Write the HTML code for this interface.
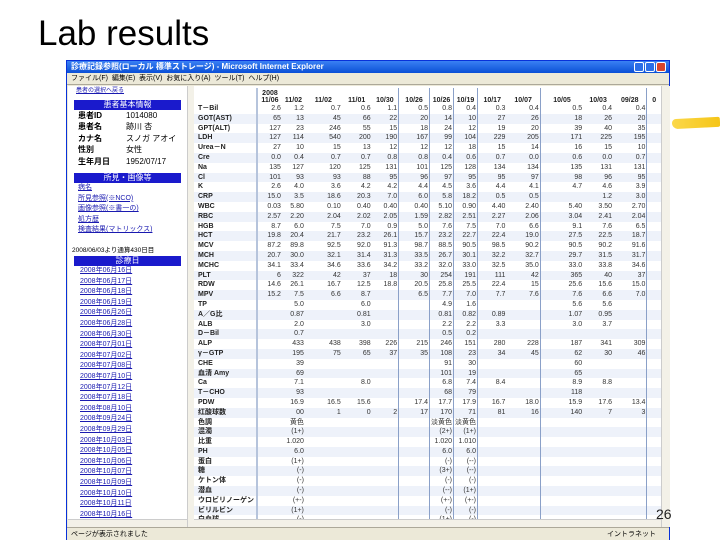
<!DOCTYPE html>
<html><head><meta charset="utf-8"><style>
*{margin:0;padding:0;box-sizing:border-box}
body{width:720px;height:540px;background:#fff;position:relative;overflow:hidden;font-family:"Liberation Sans","Noto Sans CJK JP",sans-serif}
.title{position:absolute;left:38px;top:14px;font-size:35px;color:#000}
.win{position:absolute;left:66px;top:60px;width:604px;height:480px;background:#ece9d8;border:1px solid #0831d9}
.tb{position:absolute;left:0;top:0;width:602px;height:12px;background:linear-gradient(#3a81f3,#0a4fd6);color:#fff;font-size:8px;line-height:12px;padding-left:4px;font-weight:bold}
.btn{position:absolute;top:1px;width:10px;height:10px;border:1px solid #fff;border-radius:2px;background:#2b6ee8}
.menu{position:absolute;left:0;top:12px;width:602px;height:12px;font-size:7px;line-height:12px;padding-left:4px;color:#000;border-bottom:1px solid #aca899}
.left{position:absolute;left:1px;top:25px;width:119px;height:433px;background:#fff;font-size:7px;overflow:hidden}
.lsb{position:absolute;left:120px;top:25px;width:7px;height:441px;background:#f3f1e8;border-left:1px solid #ccc}
.right{position:absolute;left:127px;top:25px;width:467px;height:433px;background:#fff;overflow:hidden}
.rsb{position:absolute;left:594px;top:25px;width:9px;height:441px;background:#f3f1e8;border-left:1px solid #ccc}
.hsb{position:absolute;top:458px;height:8px;background:#f3f1e8;border-top:1px solid #ccc}
.status{position:absolute;left:0;top:466px;width:602px;height:13px;background:#ece9d8;font-size:7px;line-height:13px;padding-left:4px;border-top:1px solid #aca899}
.hdr{background:#1a1acc;color:#fff;text-align:center;font-size:8px;height:10px;line-height:10px;margin:0 6px}
.lnk{color:#1a1ab0;text-decoration:underline;font-size:7px;height:10.6px;line-height:10.6px;padding-left:12px}
.kv{display:flex;font-size:8px;height:11.5px;line-height:11.5px;padding-left:10px}
.kv b{width:48px;color:#000}
table{border-collapse:collapse;font-size:7px;position:absolute;left:0;top:2px}
td{height:9.8px;line-height:9.8px;padding:0 1px;text-align:right;color:#333;white-space:nowrap;overflow:hidden}
td:first-child{text-align:left;font-weight:bold;color:#222;width:63px;border-right:2px solid #b6c4dc;padding-left:4px}
tr:nth-child(odd) td{background:#eef2fa}
tr.h td{background:#fff;height:16px;line-height:7px;vertical-align:bottom;text-align:center;font-weight:bold;color:#222}
.s{border-right:1px solid #8aa0c8}
</style></head><body>
<div class="title">Lab results</div>
<div style="position:absolute;left:672px;top:118px;width:48px;height:10px;background:linear-gradient(90deg,#fbd84a,#f5c518);border-radius:4px 2px 2px 6px;transform:rotate(-3deg)"></div>
<div class="win">
<div class="tb">診療記録参照(ローカル 標準ストレージ) - Microsoft Internet Explorer
<div class="btn" style="left:567px"></div><div class="btn" style="left:578px"></div><div class="btn" style="left:589px;background:#d9452c"></div></div>
<div class="menu">ファイル(F)&nbsp; 編集(E)&nbsp; 表示(V)&nbsp; お気に入り(A)&nbsp; ツール(T)&nbsp; ヘルプ(H)</div>
<div class="left">
<div class="lnk" style="padding-left:8px;font-size:6px">患者の選択へ戻る</div>
<div class="hdr" style="margin-top:3px">患者基本情報</div>
<div class="kv"><b>患者ID</b>1014080</div>
<div class="kv"><b>患者名</b>跡川 杏</div>
<div class="kv"><b>カナ名</b>スノガ アオイ</div>
<div class="kv"><b>性別</b>女性</div>
<div class="kv"><b>生年月日</b>1952/07/17</div>
<div class="hdr" style="margin-top:6px">所見・画像等</div>
<div class="lnk" style="padding-left:10px">病名</div>
<div class="lnk" style="padding-left:10px">所見参照(※NCO)</div>
<div class="lnk" style="padding-left:10px">画像参照(※書一の)</div>
<div class="lnk" style="padding-left:10px">処方歴</div>
<div class="lnk" style="padding-left:10px">検査結果(マトリックス)</div>
<div style="font-size:6.5px;margin-top:8px;padding-left:4px">2008/06/03より通算430日目</div>
<div class="hdr" style="margin-top:2px">診療日</div>
<div class="lnk">2008年06月16日</div><div class="lnk">2008年06月17日</div><div class="lnk">2008年06月18日</div><div class="lnk">2008年06月19日</div><div class="lnk">2008年06月26日</div><div class="lnk">2008年06月28日</div><div class="lnk">2008年06月30日</div><div class="lnk">2008年07月01日</div><div class="lnk">2008年07月02日</div><div class="lnk">2008年07月08日</div><div class="lnk">2008年07月10日</div><div class="lnk">2008年07月12日</div><div class="lnk">2008年07月18日</div><div class="lnk">2008年08月10日</div><div class="lnk">2008年09月24日</div><div class="lnk">2008年09月29日</div><div class="lnk">2008年10月03日</div><div class="lnk">2008年10月05日</div><div class="lnk">2008年10月06日</div><div class="lnk">2008年10月07日</div><div class="lnk">2008年10月09日</div><div class="lnk">2008年10月10日</div><div class="lnk">2008年10月11日</div><div class="lnk">2008年10月16日</div><div class="lnk">2008年10月17日</div>
</div>
<div class="lsb"></div>
<div class="right"><table>
<colgroup><col><col style="width:25px"><col style="width:23px"><col style="width:37px"><col style="width:30px"><col style="width:27px"><col style="width:31px"><col style="width:24px"><col style="width:24px"><col style="width:29px"><col style="width:34px"><col style="width:43px"><col style="width:30px"><col style="width:34px"><col style="width:14px"></colgroup>
<tr class="h"><td></td><td>2008<br>11/06</td><td>11/02</td><td>11/02</td><td>11/01</td><td class="s">10/30</td><td class="s">10/26</td><td class="s">10/26</td><td class="s">10/19</td><td>10/17</td><td class="s">10/07</td><td>10/05</td><td>10/03</td><td class="s">09/28</td><td>0</td></tr>
<tr><td>T－Bil</td><td>2.6</td><td>1.2</td><td>0.7</td><td>0.6</td><td class="s">1.1</td><td class="s">0.5</td><td class="s">0.8</td><td class="s">0.4</td><td>0.3</td><td class="s">0.4</td><td>0.5</td><td>0.4</td><td class="s">0.4</td><td></td></tr>
<tr><td>GOT(AST)</td><td>65</td><td>13</td><td>45</td><td>66</td><td class="s">22</td><td class="s">20</td><td class="s">14</td><td class="s">10</td><td>27</td><td class="s">26</td><td>18</td><td>26</td><td class="s">20</td><td></td></tr>
<tr><td>GPT(ALT)</td><td>127</td><td>23</td><td>246</td><td>55</td><td class="s">15</td><td class="s">18</td><td class="s">24</td><td class="s">12</td><td>19</td><td class="s">20</td><td>39</td><td>40</td><td class="s">35</td><td></td></tr>
<tr><td>LDH</td><td>127</td><td>114</td><td>540</td><td>200</td><td class="s">190</td><td class="s">167</td><td class="s">99</td><td class="s">104</td><td>229</td><td class="s">205</td><td>171</td><td>225</td><td class="s">195</td><td></td></tr>
<tr><td>Urea－N</td><td>27</td><td>10</td><td>15</td><td>13</td><td class="s">12</td><td class="s">12</td><td class="s">12</td><td class="s">18</td><td>15</td><td class="s">14</td><td>16</td><td>15</td><td class="s">10</td><td></td></tr>
<tr><td>Cre</td><td>0.0</td><td>0.4</td><td>0.7</td><td>0.7</td><td class="s">0.8</td><td class="s">0.8</td><td class="s">0.4</td><td class="s">0.6</td><td>0.7</td><td class="s">0.0</td><td>0.6</td><td>0.0</td><td class="s">0.7</td><td></td></tr>
<tr><td>Na</td><td>135</td><td>127</td><td>120</td><td>125</td><td class="s">131</td><td class="s">101</td><td class="s">125</td><td class="s">128</td><td>134</td><td class="s">134</td><td>135</td><td>131</td><td class="s">131</td><td></td></tr>
<tr><td>Cl</td><td>101</td><td>93</td><td>93</td><td>88</td><td class="s">95</td><td class="s">96</td><td class="s">97</td><td class="s">95</td><td>95</td><td class="s">97</td><td>98</td><td>96</td><td class="s">95</td><td></td></tr>
<tr><td>K</td><td>2.6</td><td>4.0</td><td>3.6</td><td>4.2</td><td class="s">4.2</td><td class="s">4.4</td><td class="s">4.5</td><td class="s">3.6</td><td>4.4</td><td class="s">4.1</td><td>4.7</td><td>4.6</td><td class="s">3.9</td><td></td></tr>
<tr><td>CRP</td><td>15.0</td><td>3.5</td><td>18.6</td><td>20.3</td><td class="s">7.0</td><td class="s">6.0</td><td class="s">5.8</td><td class="s">18.2</td><td>0.5</td><td class="s">0.5</td><td></td><td>1.2</td><td class="s">3.0</td><td></td></tr>
<tr><td>WBC</td><td>0.03</td><td>5.80</td><td>0.10</td><td>0.40</td><td class="s">0.40</td><td class="s">0.40</td><td class="s">5.10</td><td class="s">0.90</td><td>4.40</td><td class="s">2.40</td><td>5.40</td><td>3.50</td><td class="s">2.70</td><td></td></tr>
<tr><td>RBC</td><td>2.57</td><td>2.20</td><td>2.04</td><td>2.02</td><td class="s">2.05</td><td class="s">1.59</td><td class="s">2.82</td><td class="s">2.51</td><td>2.27</td><td class="s">2.06</td><td>3.04</td><td>2.41</td><td class="s">2.04</td><td></td></tr>
<tr><td>HGB</td><td>8.7</td><td>6.0</td><td>7.5</td><td>7.0</td><td class="s">0.9</td><td class="s">5.0</td><td class="s">7.6</td><td class="s">7.5</td><td>7.0</td><td class="s">6.6</td><td>9.1</td><td>7.6</td><td class="s">6.5</td><td></td></tr>
<tr><td>HCT</td><td>19.8</td><td>20.4</td><td>21.7</td><td>23.2</td><td class="s">26.1</td><td class="s">15.7</td><td class="s">23.2</td><td class="s">22.7</td><td>22.4</td><td class="s">19.0</td><td>27.5</td><td>22.5</td><td class="s">18.7</td><td></td></tr>
<tr><td>MCV</td><td>87.2</td><td>89.8</td><td>92.5</td><td>92.0</td><td class="s">91.3</td><td class="s">98.7</td><td class="s">88.5</td><td class="s">90.5</td><td>98.5</td><td class="s">90.2</td><td>90.5</td><td>90.2</td><td class="s">91.6</td><td></td></tr>
<tr><td>MCH</td><td>20.7</td><td>30.0</td><td>32.1</td><td>31.4</td><td class="s">31.3</td><td class="s">33.5</td><td class="s">26.7</td><td class="s">30.1</td><td>32.2</td><td class="s">32.7</td><td>29.7</td><td>31.5</td><td class="s">31.7</td><td></td></tr>
<tr><td>MCHC</td><td>34.1</td><td>33.4</td><td>34.6</td><td>33.6</td><td class="s">34.2</td><td class="s">33.2</td><td class="s">32.0</td><td class="s">33.0</td><td>32.5</td><td class="s">35.0</td><td>33.0</td><td>33.8</td><td class="s">34.6</td><td></td></tr>
<tr><td>PLT</td><td>6</td><td>322</td><td>42</td><td>37</td><td class="s">18</td><td class="s">30</td><td class="s">254</td><td class="s">191</td><td>111</td><td class="s">42</td><td>365</td><td>40</td><td class="s">37</td><td></td></tr>
<tr><td>RDW</td><td>14.6</td><td>26.1</td><td>16.7</td><td>12.5</td><td class="s">18.8</td><td class="s">20.5</td><td class="s">25.8</td><td class="s">25.5</td><td>22.4</td><td class="s">15</td><td>25.6</td><td>15.6</td><td class="s">15.0</td><td></td></tr>
<tr><td>MPV</td><td>15.2</td><td>7.5</td><td>6.6</td><td>8.7</td><td class="s"></td><td class="s">6.5</td><td class="s">7.7</td><td class="s">7.0</td><td>7.7</td><td class="s">7.6</td><td>7.6</td><td>6.6</td><td class="s">7.0</td><td></td></tr>
<tr><td>TP</td><td></td><td>5.0</td><td></td><td>6.0</td><td class="s"></td><td class="s"></td><td class="s">4.9</td><td class="s">1.6</td><td></td><td class="s"></td><td>5.6</td><td>5.6</td><td class="s"></td><td></td></tr>
<tr><td>A／G比</td><td></td><td>0.87</td><td></td><td>0.81</td><td class="s"></td><td class="s"></td><td class="s">0.81</td><td class="s">0.82</td><td>0.89</td><td class="s"></td><td>1.07</td><td>0.95</td><td class="s"></td><td></td></tr>
<tr><td>ALB</td><td></td><td>2.0</td><td></td><td>3.0</td><td class="s"></td><td class="s"></td><td class="s">2.2</td><td class="s">2.2</td><td>3.3</td><td class="s"></td><td>3.0</td><td>3.7</td><td class="s"></td><td></td></tr>
<tr><td>D－Bil</td><td></td><td>0.7</td><td></td><td></td><td class="s"></td><td class="s"></td><td class="s">0.5</td><td class="s">0.2</td><td></td><td class="s"></td><td></td><td></td><td class="s"></td><td></td></tr>
<tr><td>ALP</td><td></td><td>433</td><td>438</td><td>398</td><td class="s">226</td><td class="s">215</td><td class="s">246</td><td class="s">151</td><td>280</td><td class="s">228</td><td>187</td><td>341</td><td class="s">309</td><td></td></tr>
<tr><td>γ－GTP</td><td></td><td>195</td><td>75</td><td>65</td><td class="s">37</td><td class="s">35</td><td class="s">108</td><td class="s">23</td><td>34</td><td class="s">45</td><td>62</td><td>30</td><td class="s">46</td><td></td></tr>
<tr><td>CHE</td><td></td><td>39</td><td></td><td></td><td class="s"></td><td class="s"></td><td class="s">91</td><td class="s">30</td><td></td><td class="s"></td><td>60</td><td></td><td class="s"></td><td></td></tr>
<tr><td>血清 Amy</td><td></td><td>69</td><td></td><td></td><td class="s"></td><td class="s"></td><td class="s">101</td><td class="s">19</td><td></td><td class="s"></td><td>65</td><td></td><td class="s"></td><td></td></tr>
<tr><td>Ca</td><td></td><td>7.1</td><td></td><td>8.0</td><td class="s"></td><td class="s"></td><td class="s">6.8</td><td class="s">7.4</td><td>8.4</td><td class="s"></td><td>8.9</td><td>8.8</td><td class="s"></td><td></td></tr>
<tr><td>T－CHO</td><td></td><td>93</td><td></td><td></td><td class="s"></td><td class="s"></td><td class="s">68</td><td class="s">79</td><td></td><td class="s"></td><td>118</td><td></td><td class="s"></td><td></td></tr>
<tr><td>PDW</td><td></td><td>16.9</td><td>16.5</td><td>15.6</td><td class="s"></td><td class="s">17.4</td><td class="s">17.7</td><td class="s">17.9</td><td>16.7</td><td class="s">18.0</td><td>15.9</td><td>17.6</td><td class="s">13.4</td><td></td></tr>
<tr><td>红酸球数</td><td></td><td>00</td><td>1</td><td>0</td><td class="s">2</td><td class="s">17</td><td class="s">170</td><td class="s">71</td><td>81</td><td class="s">16</td><td>140</td><td>7</td><td class="s">3</td><td></td></tr>
<tr><td>色調</td><td></td><td>黄色</td><td></td><td></td><td class="s"></td><td class="s"></td><td class="s">淡黄色</td><td class="s">淡黄色</td><td></td><td class="s"></td><td></td><td></td><td class="s"></td><td></td></tr>
<tr><td>混濁</td><td></td><td>(1+)</td><td></td><td></td><td class="s"></td><td class="s"></td><td class="s">(2+)</td><td class="s">(1+)</td><td></td><td class="s"></td><td></td><td></td><td class="s"></td><td></td></tr>
<tr><td>比重</td><td></td><td>1.020</td><td></td><td></td><td class="s"></td><td class="s"></td><td class="s">1.020</td><td class="s">1.010</td><td></td><td class="s"></td><td></td><td></td><td class="s"></td><td></td></tr>
<tr><td>PH</td><td></td><td>6.0</td><td></td><td></td><td class="s"></td><td class="s"></td><td class="s">6.0</td><td class="s">6.0</td><td></td><td class="s"></td><td></td><td></td><td class="s"></td><td></td></tr>
<tr><td>蛋白</td><td></td><td>(1+)</td><td></td><td></td><td class="s"></td><td class="s"></td><td class="s">(-)</td><td class="s">(--)</td><td></td><td class="s"></td><td></td><td></td><td class="s"></td><td></td></tr>
<tr><td>糖</td><td></td><td>(-)</td><td></td><td></td><td class="s"></td><td class="s"></td><td class="s">(3+)</td><td class="s">(--)</td><td></td><td class="s"></td><td></td><td></td><td class="s"></td><td></td></tr>
<tr><td>ケトン体</td><td></td><td>(-)</td><td></td><td></td><td class="s"></td><td class="s"></td><td class="s">(-)</td><td class="s">(-)</td><td></td><td class="s"></td><td></td><td></td><td class="s"></td><td></td></tr>
<tr><td>潜血</td><td></td><td>(-)</td><td></td><td></td><td class="s"></td><td class="s"></td><td class="s">(--)</td><td class="s">(1+)</td><td></td><td class="s"></td><td></td><td></td><td class="s"></td><td></td></tr>
<tr><td>ウロビリノーゲン</td><td></td><td>(+-)</td><td></td><td></td><td class="s"></td><td class="s"></td><td class="s">(+-)</td><td class="s">(+-)</td><td></td><td class="s"></td><td></td><td></td><td class="s"></td><td></td></tr>
<tr><td>ビリルビン</td><td></td><td>(1+)</td><td></td><td></td><td class="s"></td><td class="s"></td><td class="s">(-)</td><td class="s">(-)</td><td></td><td class="s"></td><td></td><td></td><td class="s"></td><td></td></tr>
<tr><td>白血球</td><td></td><td>(-)</td><td></td><td></td><td class="s"></td><td class="s"></td><td class="s">(1+)</td><td class="s">(-)</td><td></td><td class="s"></td><td></td><td></td><td class="s"></td><td></td></tr>
</table></div>
<div class="rsb"></div>
<div class="hsb" style="left:1px;width:119px"></div>
<div class="hsb" style="left:127px;width:467px"></div>
<div class="status">ページが表示されました<span style="position:absolute;left:540px">イントラネット</span></div>
</div>
<div style="position:absolute;left:656px;top:506px;font-size:14px;color:#222;z-index:5">26</div>
</body></html>
